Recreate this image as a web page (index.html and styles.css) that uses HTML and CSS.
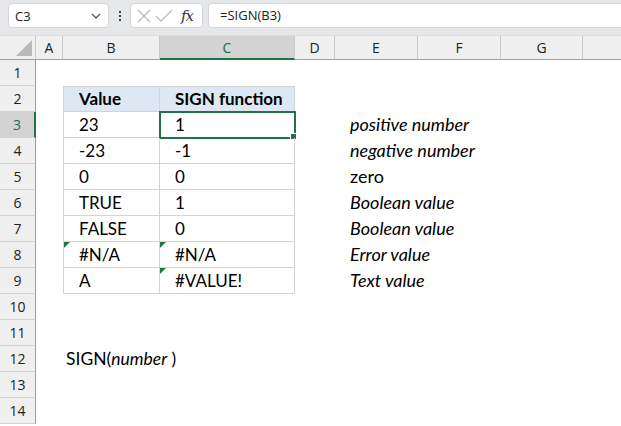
FILE: index.html
```html
<!DOCTYPE html>
<html>
<head>
<meta charset="utf-8">
<link rel="stylesheet" href="styles.css">
</head>
<body>
<div class="toolbar">
  <div class="namebox">
    <span class="name">C3</span>
    <svg class="chev" width="10" height="6" viewBox="0 0 10 6"><path d="M1 1 L5 5 L9 1" fill="none" stroke="#555" stroke-width="1.3"/></svg>
  </div>
  <div class="dots"><i></i><i></i><i></i></div>
  <div class="fxbox">
    <svg width="14" height="14" viewBox="0 0 14 14"><path d="M1 1 L13 13 M13 1 L1 13" stroke="#b4b4b4" stroke-width="1.1" fill="none"/></svg>
    <svg width="18" height="14" viewBox="0 0 18 14"><path d="M1 7 L6 12 L17 1" stroke="#b4b4b4" stroke-width="1.1" fill="none"/></svg>
    <span class="fx">fx</span>
  </div>
  <div class="formula">=SIGN(B3)</div>
</div>
<div class="sheet">
  <div class="corner"><svg width="18" height="18" viewBox="0 0 18 18"><polygon points="17,1 17,17 1,17" fill="#b9b9b9"/></svg></div>
  <div class="ch">A</div><div class="ch">B</div><div class="ch sel">C</div><div class="ch">D</div><div class="ch">E</div><div class="ch">F</div><div class="ch">G</div><div class="ch last"></div>

  <div class="rh">1</div><div></div><div></div><div></div><div></div><div></div><div></div><div></div><div></div>

  <div class="rh">2</div><div></div><div class="c tb th tl tt">Value</div><div class="c tb th tt">SIGN function</div><div></div><div></div><div></div><div></div><div></div>

  <div class="rh sel">3</div><div></div><div class="c tb tl">23</div><div class="c tb active">1</div><div></div><div class="c note it">positive number</div><div></div><div></div><div></div>

  <div class="rh">4</div><div></div><div class="c tb tl">-23</div><div class="c tb">-1</div><div></div><div class="c note it">negative number</div><div></div><div></div><div></div>

  <div class="rh">5</div><div></div><div class="c tb tl">0</div><div class="c tb">0</div><div></div><div class="c note">zero</div><div></div><div></div><div></div>

  <div class="rh">6</div><div></div><div class="c tb tl">TRUE</div><div class="c tb">1</div><div></div><div class="c note it">Boolean value</div><div></div><div></div><div></div>

  <div class="rh">7</div><div></div><div class="c tb tl">FALSE</div><div class="c tb">0</div><div></div><div class="c note it">Boolean value</div><div></div><div></div><div></div>

  <div class="rh">8</div><div></div><div class="c tb tl err">#N/A</div><div class="c tb err">#N/A</div><div></div><div class="c note it">Error value</div><div></div><div></div><div></div>

  <div class="rh">9</div><div></div><div class="c tb tl">A</div><div class="c tb err">#VALUE!</div><div></div><div class="c note it">Text value</div><div></div><div></div><div></div>

  <div class="rh">10</div><div></div><div></div><div></div><div></div><div></div><div></div><div></div><div></div>
  <div class="rh">11</div><div></div><div></div><div></div><div></div><div></div><div></div><div></div><div></div>
  <div class="rh">12</div><div></div><div class="c syn">SIGN(<i>number</i> )</div><div></div><div></div><div></div><div></div><div></div><div></div>
  <div class="rh">13</div><div></div><div></div><div></div><div></div><div></div><div></div><div></div><div></div>
  <div class="rh">14</div><div></div><div></div><div></div><div></div><div></div><div></div><div></div><div></div>
</div>
</body>
</html>
```
FILE: styles.css
```css
* { box-sizing: border-box; }
html, body { margin: 0; padding: 0; background: #fff; overflow: hidden; }
body { width: 621px; height: 426px; font-family: "Open Sans", "Noto Sans", sans-serif; }

.toolbar {
  height: 36px;
  background: #e6e7ea;
  display: flex;
  align-items: flex-start;
  padding: 3px 0 0 8px;
  border-bottom: 1px solid #dcdcdc;
}
.namebox {
  width: 101px; height: 25px;
  background: #fff;
  border: 1px solid #d6d6d6;
  border-radius: 4px;
  display: flex; align-items: center; justify-content: space-between;
  padding: 0 7px 0 6px;
  font-size: 13px; color: #222;
}
.dots {
  width: 21px; height: 25px;
  display: flex; flex-direction: column; align-items: center; justify-content: center; gap: 2px;
}
.dots i { display: block; width: 2px; height: 2px; background: #444; }
.fxbox {
  width: 73px; height: 25px;
  background: #fff;
  border: 1px solid #d6d6d6;
  border-radius: 4px;
  display: flex; align-items: center;
  padding-left: 6px; gap: 4px;
}
.fx { font-family: "DejaVu Serif", "Liberation Serif", serif; font-style: italic; font-size: 15px; color: #333; margin-left: 4px; letter-spacing: -1px; }
.formula {
  flex: 1; height: 25px;
  margin-left: 5px;
  background: #fff;
  border: 1px solid #d6d6d6;
  border-right: none;
  border-radius: 4px 0 0 4px;
  padding-left: 11px;
  font-size: 13px; line-height: 23px; color: #222;
}

.sheet {
  display: grid;
  grid-template-columns: 36px 27px 97px 135px 40px 83px 83px 82px 38px;
  grid-template-rows: 24px repeat(14, 26px);
}
.corner { background: #efefef; border-right: 1px solid #c8c8c8; border-bottom: 1px solid #9e9e9e; display: flex; align-items: flex-end; justify-content: flex-end; padding: 0 2px 2px 0; }
.ch {
  background: #efefef;
  border-right: 1px solid #c8c8c8;
  border-bottom: 1px solid #9e9e9e;
  text-align: center;
  font-size: 14px; line-height: 23px; color: #222;
}
.ch.last { border-right: none; }
.ch.sel { background: #d3d3d3; color: #1e6e42; border-bottom: 2px solid #217346; }
.rh {
  background: #efefef;
  border-right: 1px solid #9e9e9e;
  border-bottom: 1px solid #d2d2d2;
  text-align: center;
  font-size: 14px; line-height: 26px; color: #222;
}
.rh.sel { background: #d3d3d3; color: #1e6e42; border-right: 2px solid #217346; }

.c {
  font-family: "Lato", "Open Sans", sans-serif;
  font-size: 17px; line-height: 25px; color: #000;
  white-space: nowrap;
  position: relative;
}
.tb { border-right: 1px solid #d4d4d4; border-bottom: 1px solid #d4d4d4; padding-left: 15px; }
.tl { border-left: 1px solid #d4d4d4; }
.tt { border-top: 1px solid #d4d4d4; line-height: 24px; }
.th { background: #dde8f4; font-weight: bold; }
.active { outline: 2px solid #217346; outline-offset: -1px; }
.active::after {
  content: ""; position: absolute; right: -3px; bottom: -3px;
  width: 5px; height: 5px; background: #217346; border: 1px solid #fff;
}
.err::before {
  content: ""; position: absolute; left: 0; top: 0;
  border-top: 6px solid #1e7a3c; border-right: 6px solid transparent;
}
.note { padding-left: 15px; overflow: visible; font-size: 18px; }
.it { font-style: italic; }
.syn { padding-left: 3px; overflow: visible; font-size: 17.5px; }
.syn i { font-style: italic; }
```
